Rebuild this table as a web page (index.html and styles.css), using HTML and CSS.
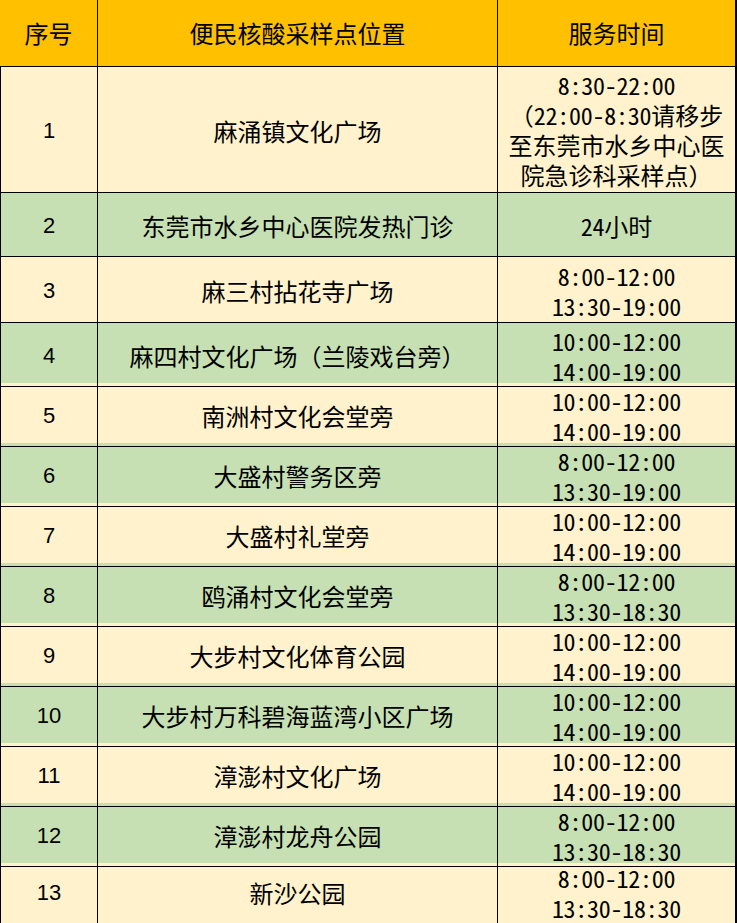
FILE: index.html
```html
<!DOCTYPE html>
<html lang="zh-CN">
<head>
<meta charset="utf-8">
<title>便民核酸采样点</title>
<link rel="stylesheet" href="styles.css">
</head>
<body>
<div class="table">
  <div class="row head h-head"><div class="c c1">序号</div><div class="c c2">便民核酸采样点位置</div><div class="c c3">服务时间</div></div>
  <div class="row cream h-r1"><div class="c c1 num">1</div><div class="c c2">麻涌镇文化广场</div><div class="c c3 pt0"><span class="t">8:30-22:00</span><span>（<span class="t">22:00-8:30</span>请移步</span><span>至东莞市水乡中心医</span><span>院急诊科采样点）</span></div></div>
  <div class="row green h-r2"><div class="c c1 num">2</div><div class="c c2">东莞市水乡中心医院发热门诊</div><div class="c c3"><span><span class="t">24</span>小时</span></div></div>
  <div class="row cream h-r3"><div class="c c1 num">3</div><div class="c c2">麻三村拈花寺广场</div><div class="c c3"><span class="t">8:00-12:00</span><span class="t">13:30-19:00</span></div></div>
  <div class="row green h-r"><div class="c c1 num">4</div><div class="c c2">麻四村文化广场（兰陵戏台旁）</div><div class="c c3"><span class="t">10:00-12:00</span><span class="t">14:00-19:00</span></div></div>
  <div class="row cream h-r"><div class="c c1 num">5</div><div class="c c2">南洲村文化会堂旁</div><div class="c c3"><span class="t">10:00-12:00</span><span class="t">14:00-19:00</span></div></div>
  <div class="row green h-r"><div class="c c1 num">6</div><div class="c c2">大盛村警务区旁</div><div class="c c3"><span class="t">8:00-12:00</span><span class="t">13:30-19:00</span></div></div>
  <div class="row cream h-r"><div class="c c1 num">7</div><div class="c c2">大盛村礼堂旁</div><div class="c c3"><span class="t">10:00-12:00</span><span class="t">14:00-19:00</span></div></div>
  <div class="row green h-r"><div class="c c1 num">8</div><div class="c c2">鸥涌村文化会堂旁</div><div class="c c3"><span class="t">8:00-12:00</span><span class="t">13:30-18:30</span></div></div>
  <div class="row cream h-r"><div class="c c1 num">9</div><div class="c c2">大步村文化体育公园</div><div class="c c3"><span class="t">10:00-12:00</span><span class="t">14:00-19:00</span></div></div>
  <div class="row green h-r"><div class="c c1 num">10</div><div class="c c2">大步村万科碧海蓝湾小区广场</div><div class="c c3"><span class="t">10:00-12:00</span><span class="t">14:00-19:00</span></div></div>
  <div class="row cream h-r"><div class="c c1 num">11</div><div class="c c2">漳澎村文化广场</div><div class="c c3"><span class="t">10:00-12:00</span><span class="t">14:00-19:00</span></div></div>
  <div class="row green h-r"><div class="c c1 num">12</div><div class="c c2">漳澎村龙舟公园</div><div class="c c3"><span class="t">8:00-12:00</span><span class="t">13:30-18:30</span></div></div>
  <div class="row cream h-r last"><div class="c c1 num">13</div><div class="c c2">新沙公园</div><div class="c c3"><span class="t">8:00-12:00</span><span class="t">13:30-18:30</span></div></div>
</div>
</body>
</html>
```
FILE: styles.css
```css
html, body {
  margin: 0;
  padding: 0;
  background: #ffffff;
}
.table {
  width: 737px;
  font-family: "Noto Sans CJK SC", "Noto Sans", sans-serif;
  font-size: 24px;
  color: #000;
}
.row {
  display: grid;
  grid-template-columns: 98px 400px 239px;
}
.c {
  box-sizing: border-box;
  border-right: 1px solid #000;
  border-bottom: 1px solid #000;
  display: flex;
  flex-direction: column;
  align-items: center;
  justify-content: center;
  text-align: center;
  line-height: 30px;
  padding-top: 3px;
  white-space: nowrap;
}
.c1 {
  border-left: 1px solid #000;
}
.head .c1 {
  border-left: 0;
}
.c > span {
  display: block;
  height: 30px;
}
.t {
  font-feature-settings: "hwid" 1;
  letter-spacing: -0.25px;
}
.c3 {
  border-right-width: 2px;
}
.last .c {
  border-bottom-width: 2px;
  padding-top: 0;
}
.num {
  font-family: "Liberation Sans", Arial, sans-serif;
  font-size: 22px;
}
.head { background: #ffc000; }
.head .c { padding-top: 0; }
.cream { background: #fff2cc; }
.green { background: #c6e0b4; }
.h-head { height: 67px; }
.h-r1 { height: 126px; }
.h-r2 { height: 64px; }
.h-r3 { height: 66px; }
.h-r { height: 60px; }
.c.pt0 { padding-top: 0; }
```
